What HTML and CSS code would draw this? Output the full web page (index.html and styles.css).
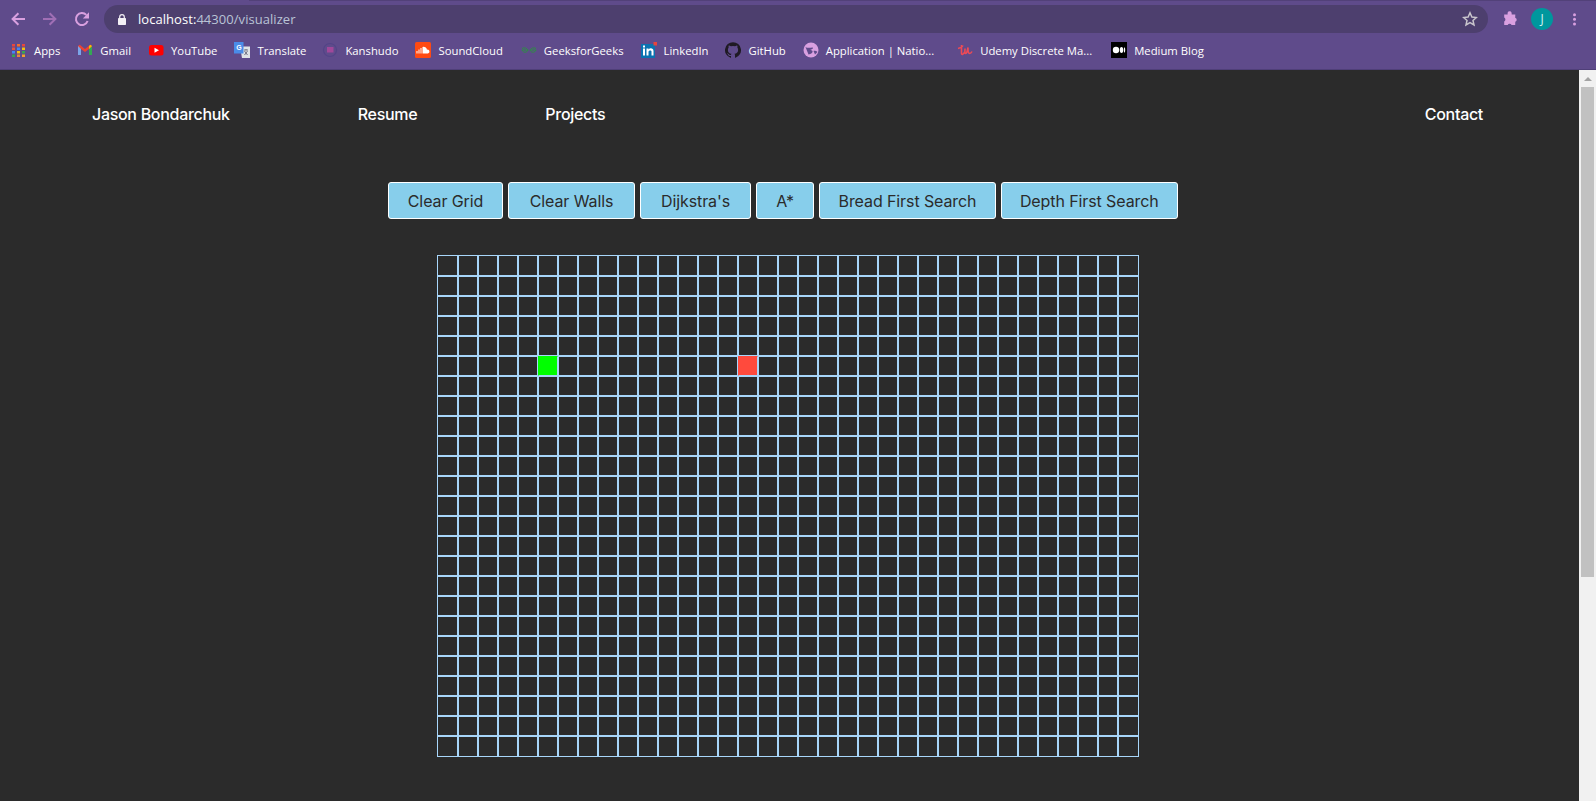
FILE: index.html
```html
<!DOCTYPE html>
<html lang="en">
<head>
<meta charset="utf-8">
<title>Visualizer</title>
<link rel="stylesheet" href="styles.css">
</head>
<body>
<header class="chrome">
  <div class="toolbar">
    <svg class="nav-icon" viewBox="0 0 16 16"><path d="M15 8H2.800M8.400 2.200L2.600 8l5.800 5.800" fill="none" stroke="#d9a0e0" stroke-width="2"/></svg>
    <svg class="nav-icon" viewBox="0 0 16 16"><path d="M1 8h12.200M7.600 2.200L13.400 8l-5.800 5.800" fill="none" stroke="#a06fb5" stroke-width="2"/></svg>
    <svg class="nav-icon reload" viewBox="0 0 16 16"><path d="M13.600 10A6 6 0 1 1 12.300 3.900" fill="none" stroke="#d9a0e0" stroke-width="2"/><path d="M15 1.200v6.200H8.800z" fill="#d9a0e0"/></svg>
    <div class="omnibox">
      <svg class="lock" viewBox="0 0 8 11"><rect y="4" width="8" height="7" rx=".7" fill="#f3f0f5"/><path d="M1.700 4.500V2.900a2.300 2.300 0 0 1 4.600 0v1.600" fill="none" stroke="#f3f0f5" stroke-width="1.200"/></svg>
      <span class="url"><span class="host">localhost:</span>44300/visualizer</span>
      <svg class="star" viewBox="0 0 16 16"><path d="M8 1.800l1.900 4.200 4.500.5-3.400 3 1 4.500L8 11.700 4 14l1-4.500-3.400-3 4.500-.5z" fill="none" stroke="#c9c5cc" stroke-width="1.500"/></svg>
    </div>
    <svg class="puzzle" viewBox="0 0 16 16"><path d="M5.600 1.800a2.100 2.100 0 0 1 4 0l.1 1.700h3.600l-.1 3.300a2.100 2.100 0 0 1 .1 4l-.1 3.200h-3.600a2.100 2.100 0 0 0-3.900 0H2.200v-3.600a2.100 2.100 0 0 0 0-3.800V3.500h3.400z" fill="#d9a0e0"/></svg>
    <div class="avatar">J</div>
    <svg class="kebab" viewBox="0 0 3 13"><circle cx="1.500" cy="1.700" r="1.500"/><circle cx="1.500" cy="6.300" r="1.500"/><circle cx="1.500" cy="11" r="1.500"/></svg>
  </div>
  <div class="bookmarks">
    <a class="bm"><svg viewBox="0 0 16 16"><rect x="1" y="2" width="3" height="2.500" fill="#e8453c"/><rect x="6" y="2" width="3" height="2.500" fill="#f0702c"/><rect x="11" y="2" width="3" height="2.500" fill="#e8453c"/><rect x="1" y="5.500" width="3" height="2.500" fill="#e8553c"/><rect x="6" y="5.500" width="3" height="2.500" fill="#4285f4"/><rect x="11" y="5.500" width="3" height="2.500" fill="#f4c20d"/><rect x="1" y="9" width="3" height="2.500" fill="#4285f4"/><rect x="6" y="9" width="3" height="2.500" fill="#f4c20d"/><rect x="11" y="9" width="3" height="2.500" fill="#34a853"/><rect x="1" y="12.500" width="3" height="2.500" fill="#34a853"/><rect x="6" y="12.500" width="3" height="2.500" fill="#e8853c"/><rect x="11" y="12.500" width="3" height="2.500" fill="#f4a02c"/></svg>Apps</a>
    <a class="bm"><svg viewBox="0 0 16 16"><path d="M1 4v9h3V7l4 3 4-3v6h3V4l-1.700-1.200L8 7 2.700 2.800z" fill="#ea4335"/><path d="M1 4v9h3V7z" fill="#7ba4e8"/><path d="M12 7v6h3V4z" fill="#34a853"/><path d="M15 4l-1.700-1.200L12 4v3z" fill="#fbbc05"/></svg>Gmail</a>
    <a class="bm"><svg viewBox="0 0 16 16"><rect x="1" y="3" width="14.500" height="10.500" rx="2.500" fill="#f00"/><path d="M6.500 5.800v5L11 8.300z" fill="#fff"/></svg>YouTube</a>
    <a class="bm bm-narrow"><svg viewBox="0 0 16 16"><path d="M6 4.500h10V16H8z" fill="#dfe3e6"/><path d="M0 0h9.500v11.500H0z" fill="#4a8ce8"/><text x="2.200" y="8" class="g-t">G</text><path d="M10 8h4M12 7v1M10.500 13l3-4M10.500 9l3 4" stroke="#667" stroke-width=".9"/></svg>Translate</a>
    <a class="bm"><svg viewBox="0 0 16 16"><circle cx="8" cy="8" r="6.500" fill="none" stroke="#534487" stroke-width="1.200"/><rect x="5" y="5" width="6.500" height="5.500" fill="#a0489a"/></svg>Kanshudo</a>
    <a class="bm bm-wide"><svg viewBox="0 0 16 16"><rect width="16" height="16" rx="1.500" fill="#ff4a12"/><path d="M1.500 11.500V9h1v2.500zM3.500 11.500V7.500h1v4zM5.500 11.500V6h1v5.500zM7.500 11.500V5a3.400 3.400 0 0 1 4.500 2.700 1.900 1.900 0 0 1 1 3.800z" fill="#fff"/></svg>SoundCloud</a>
    <a class="bm"><svg viewBox="0 0 16 16"><path d="M1 6.500c3-1.500 5 0 6 1.500H1M15 6.500c-3-1.500-5 0-6 1.500h6M1 8c1 3 5 3 6 0M15 8c-1 3-5 3-6 0" fill="none" stroke="#2f8d46" stroke-width="1"/></svg>GeeksforGeeks</a>
    <a class="bm"><svg viewBox="0 0 16 16"><rect y="2" width="14" height="14" fill="#0a73b1"/><rect x="12.500" y="0" width="3.500" height="3.500" fill="#e8453c"/><path d="M2 6.500h2v7H2zM2 3.500h2v2H2zM5.500 6.500h2v1c1.500-2 5-1.500 5 1.500v4.500h-2V9.500c0-1.500-3-1.500-3 .5v3.500h-2z" fill="#fff"/></svg>LinkedIn</a>
    <a class="bm"><svg viewBox="0 0 16 16"><path d="M8 .2a8 8 0 0 0-2.500 15.600c.4 0 .5-.2.500-.4v-1.400c-2.200.5-2.700-1-2.700-1-.4-.9-.9-1.200-.9-1.200-.7-.5 0-.5 0-.5.800 0 1.200.8 1.200.8.700 1.200 1.900.9 2.400.7 0-.5.300-.9.500-1.100-1.800-.2-3.600-.9-3.600-4 0-.9.300-1.600.8-2.100 0-.2-.4-1 .1-2.100 0 0 .7-.2 2.200.8a7.500 7.500 0 0 1 4 0c1.500-1 2.200-.8 2.200-.8.500 1.100.2 1.900.1 2.100.5.500.8 1.200.8 2.100 0 3.100-1.900 3.800-3.700 4 .3.300.6.700.6 1.500v2.200c0 .2.100.5.500.4A8 8 0 0 0 8 .2z" fill="#1f1a24"/></svg>GitHub</a>
    <a class="bm bm-long"><svg viewBox="0 0 16 16"><circle cx="8" cy="8" r="7.500" fill="#d9a0e0"/><path d="M2.500 5c2 1.500 5 .5 7 .5 1.500.5-.5 2-2.500 2.500 2 0 3.500 1 2 3-1 1-2.500 1-3.500 1.500M10.500 9c1.500-.5 3 0 4 1l-2.500 2.500z" fill="#5f4b8b"/></svg>Application | Natio...</a>
    <a class="bm bm-xwide"><svg viewBox="0 0 16 16"><path d="M1 6.500c2-.5 4-1 5-3M4.500 3v8c0 2 1.500 2 3-1M8 6.500c0 3-.5 5 .5 5 1.500 0 2-3 2.500-6 0 3 0 6 1.500 6 1 0 2-1 2.500-2" fill="none" stroke="#ee4a55" stroke-width="1.600"/></svg>Udemy Discrete Ma...</a>
    <a class="bm"><svg viewBox="0 0 16 16"><rect width="16" height="16" fill="#000"/><ellipse cx="5" cy="8" rx="3.200" ry="3.300" fill="#fff"/><ellipse cx="10.500" cy="8" rx="1.700" ry="3" fill="#fff"/><ellipse cx="13.500" cy="8" rx=".7" ry="2.700" fill="#fff"/></svg>Medium Blog</a>
  </div>
</header>
<div class="viewport">
  <main class="page">
    <nav class="site-nav">
      <a class="link">Jason Bondarchuk</a>
      <a class="link">Resume</a>
      <a class="link">Projects</a>
      <a class="link contact">Contact</a>
    </nav>
    <div class="actions">
      <button class="btn">Clear Grid</button>
      <button class="btn">Clear Walls</button>
      <button class="btn">Dijkstra's</button>
      <button class="btn">A*</button>
      <button class="btn">Bread First Search</button>
      <button class="btn">Depth First Search</button>
    </div>
    <div class="grid" id="grid"></div>
  </main>
  <aside class="scrollbar">
    <div class="arrow"></div>
    <div class="thumb"></div>
  </aside>
</div>
<script src="grid.js"></script>
</body>
</html>
```
FILE: grid.js
```js
var grid = document.getElementById('grid');
for (var r = 0; r < 25; r++) {
  for (var c = 0; c < 35; c++) {
    var d = document.createElement('div');
    d.className = 'cell';
    if (r === 5 && c === 5) d.className += ' start';
    if (r === 5 && c === 15) d.className += ' end';
    grid.appendChild(d);
  }
}
```
FILE: styles.css
```css
* { box-sizing: border-box; }
html, body { margin: 0; height: 100%; overflow: hidden; }
body { font-family: "Inter", "Liberation Sans", sans-serif; background: #2b2b2b; }
.chrome { position: relative; height: 70px; background: #5f4b8b; border-bottom: 1px solid #4f3f78; }
.chrome::before { content: ""; position: absolute; top: 0; left: 249px; right: 0; height: 1px; background: #524179; }
.toolbar { height: 37px; display: flex; align-items: center; padding: 1px 20px 0 10px; }
.nav-icon { width: 16px; height: 16px; margin-right: 16px; flex: none; }
.nav-icon.reload { margin-right: 14px; }
.omnibox { flex: 1; height: 28px; background: #4d3f6e; border-radius: 14px; display: flex; align-items: center; padding: 0 10px 0 14px; }
.lock { width: 8px; height: 11px; margin-right: 12px; flex: none; }
.url { flex: 1; font: 13px "Open Sans", "Noto Sans", sans-serif; letter-spacing: .05px; color: #b9c4d6; }
.host { color: #fff; }
.star { width: 16px; height: 16px; }
.puzzle { width: 16px; height: 16px; margin-left: 14px; flex: none; }
.avatar { width: 22px; height: 22px; margin-left: 13px; border-radius: 50%; background: #00979d; color: #d6f3f5; font: 12px/22px "Open Sans", sans-serif; text-align: center; flex: none; }
.kebab { width: 3px; height: 13px; margin-left: 20px; fill: #d9a0e0; flex: none; }
.bookmarks { height: 26px; display: flex; align-items: center; padding: 0 0 0 11px; }
.bm { display: flex; align-items: center; color: #fff; font: 11.3px "Open Sans", "Noto Sans", sans-serif; margin-right: 17px; white-space: nowrap; }
.bm-narrow { margin-right: 16px; }
.bm-wide { margin-right: 18px; }
.bm-xwide { margin-right: 19px; }
.bm-long { margin-right: 23px; }
.bm svg { width: 16px; height: 16px; margin-right: 7px; flex: none; }
.g-t { font: bold 7px "Liberation Sans", sans-serif; fill: #fff; }
.viewport { height: 731px; display: flex; }
.page { flex: 1; min-width: 0; background: #2b2b2b; }
.site-nav { height: 88px; padding: 0 96px 0 92px; display: flex; align-items: center; gap: 128px; }
.link { color: #fff; font: 500 16px "Inter", sans-serif; letter-spacing: -.3px; }
.contact { margin-left: auto; }
.actions { display: grid; grid-template-columns: 115px 127px 111px 58px 177px 176.500px; gap: 5px; margin-top: 24px; padding-left: 388px; }
.btn { height: 37px; padding: 0; background: #87ceeb; border: 1px solid #fff; border-radius: 3px; color: #2b2b2b; font: 400 16px "Inter", sans-serif; letter-spacing: -.1px; }
.grid { display: grid; grid-template-columns: 21px repeat(33, 20px) 21px; grid-template-rows: 21px repeat(23, 20px) 21px; width: 702px; margin: 36px 0 0 437px; }
.cell { border: 1px solid #a8d6fa; }
.start { background: #0f0; border-top-color: #0f0; border-left-color: #0f0; }
.end { background: #ff4a3d; border-top-color: #ff4a3d; border-left-color: #ff4a3d; }
.scrollbar { width: 17px; background: #f1f1f1; display: flex; flex-direction: column; align-items: center; }
.arrow { margin-top: 7px; width: 0; height: 0; border-left: 4px solid transparent; border-right: 4px solid transparent; border-bottom: 4px solid #a3a3a3; }
.thumb { width: 13px; height: 490px; margin-top: 6px; background: #c1c1c1; }
```
